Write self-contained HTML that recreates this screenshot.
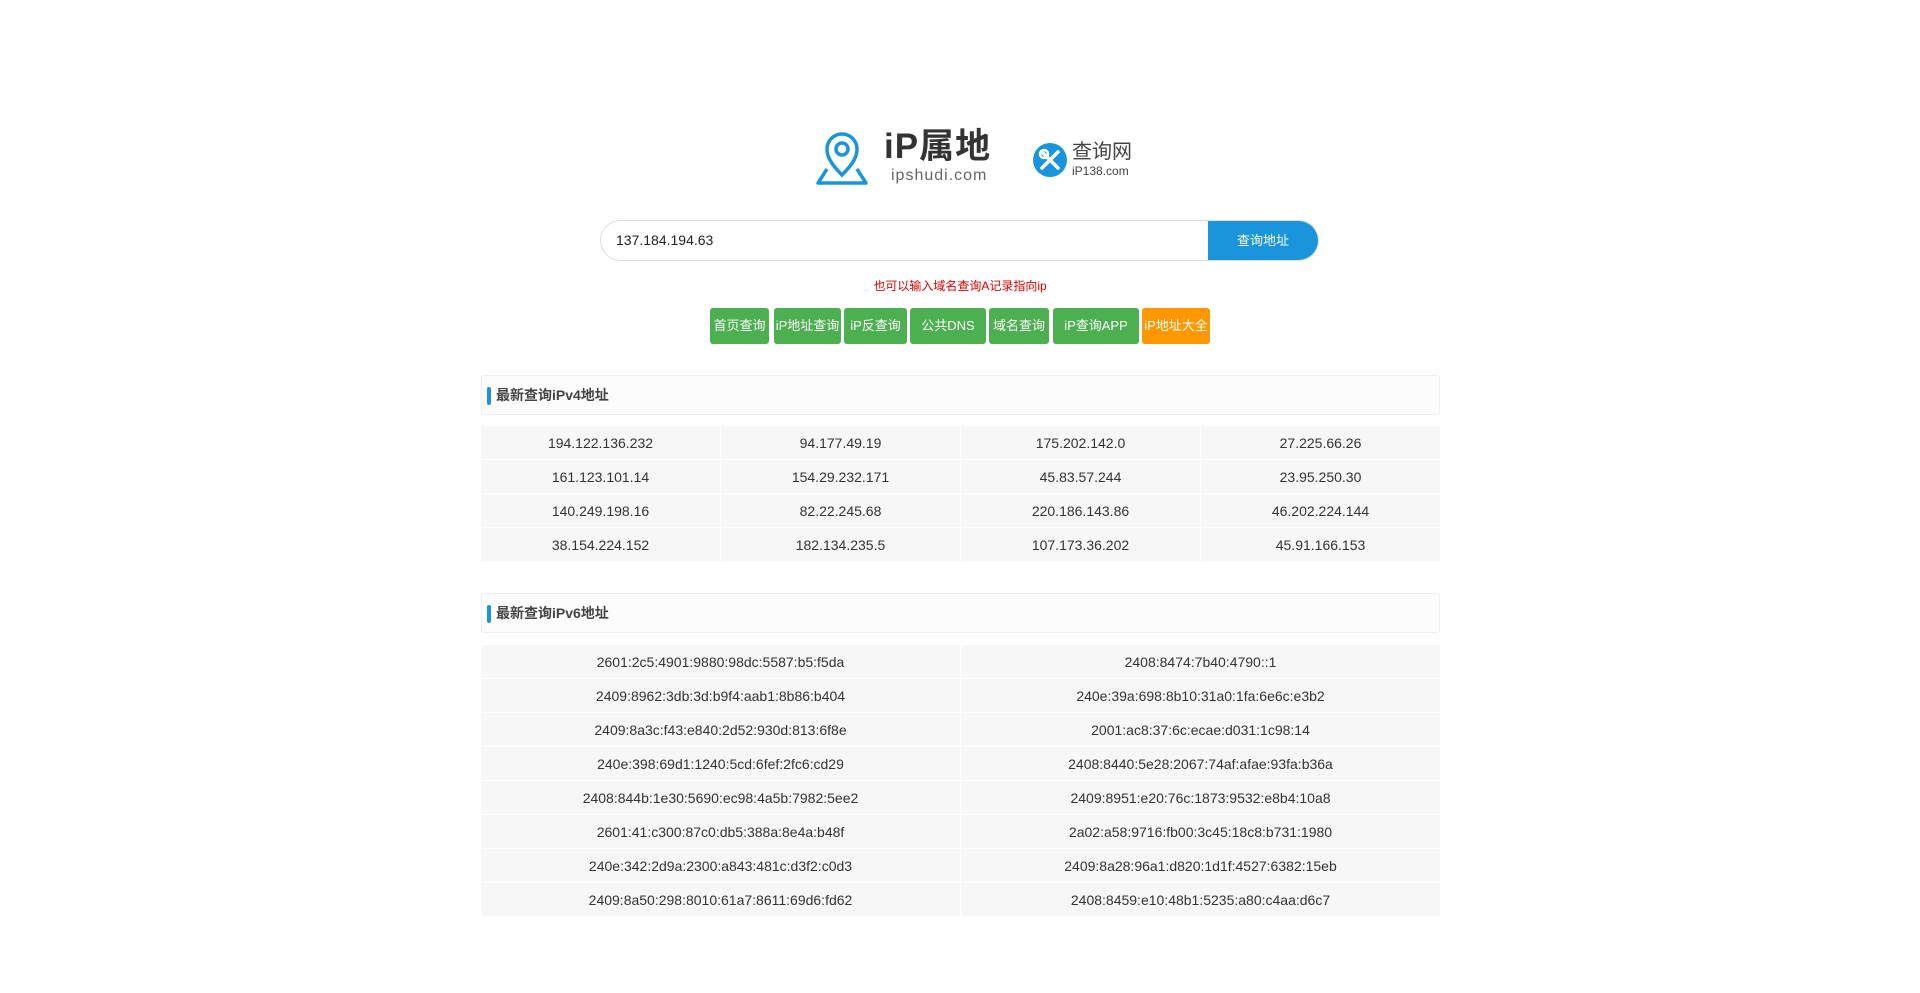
<!DOCTYPE html>
<html><head><meta charset="utf-8"><style>
*{margin:0;padding:0;box-sizing:border-box}
body{width:1920px;height:993px;background:#fff;font-family:"Liberation Sans","Noto Sans CJK SC",sans-serif;color:#333;position:relative;overflow:hidden}
.abs{position:absolute}
.search{left:600px;top:220px;width:719px;height:41px;border:1px solid #ddd;border-radius:21px;overflow:hidden}
.search .val{position:absolute;left:15px;top:11px;font-size:14px;color:#222}
.search .btn{position:absolute;right:0;top:0;width:110px;height:100%;background:#1a94db;color:#fff;font-size:13px;text-align:center;line-height:39px}
.hint{left:0;width:1920px;top:277px;text-align:center;color:#d00;font-size:12px}
.nav a{position:absolute;top:308px;height:36px;line-height:36px;text-align:center;background:#4caf50;color:#fff;font-size:13px;border-radius:3px;text-decoration:none;white-space:nowrap;overflow:hidden}
.title{left:481px;width:959px;height:40px;border:1px solid #eee;border-radius:3px;background:#fcfcfc;font-size:14px;font-weight:bold;color:#444;line-height:38px;padding-left:14px}
.title:before{content:"";position:absolute;left:5px;top:11px;width:4px;height:18px;background:#1a94db;border-radius:2px}
table{position:absolute;left:480px;width:961px;border-collapse:collapse;table-layout:fixed;font-size:14px;color:#333}
td{background:#f7f7f7;border:1px solid #fff;height:34px;text-align:center}
</style></head><body>
<svg class="abs" style="left:814px;top:131px" width="60" height="58" viewBox="0 0 60 58">
<path d="M28 44 C16 32 13 25 13 18 A15 15 0 0 1 43 18 C43 25 40 32 28 44Z" fill="none" stroke="#1a94db" stroke-width="3.5"/>
<circle cx="28" cy="18" r="6" fill="none" stroke="#1a94db" stroke-width="3.5"/>
<path d="M13 38 L4 52 H52 L43 38" fill="none" stroke="#1a94db" stroke-width="3.5" stroke-linejoin="round"/>
</svg>
<div class="abs" style="left:884px;top:127px;font-size:35px;line-height:40px;font-weight:bold;color:#333;letter-spacing:1px">iP属地</div>
<div class="abs" style="left:891px;top:167px;font-size:16px;line-height:18px;color:#666;letter-spacing:1px">ipshudi.com</div>
<svg class="abs" style="left:1032px;top:142px" width="36" height="36" viewBox="0 0 36 36"><circle cx="18" cy="18" r="17" fill="#1a94db"/><path d="M10 26 L26 10 M10 10 L16 16 M20 20 L26 26" stroke="#fff" stroke-width="3.5" stroke-linecap="round"/><circle cx="12" cy="12" r="4" fill="none" stroke="#fff" stroke-width="2.5"/></svg>
<div class="abs" style="left:1072px;top:141px;font-size:20px;line-height:22px;color:#444">查询网</div>
<div class="abs" style="left:1072px;top:164px;font-size:12px;color:#444">iP138.com</div>
<div class="abs search"><div class="val">137.184.194.63</div><div class="btn">查询地址</div></div>
<div class="abs hint">也可以输入域名查询A记录指向ip</div>
<div class="nav">
<a style="left:710px;width:59px">首页查询</a>
<a style="left:774px;width:67px">iP地址查询</a>
<a style="left:844px;width:63px">iP反查询</a>
<a style="left:910px;width:76px">公共DNS</a>
<a style="left:989px;width:60px">域名查询</a>
<a style="left:1053px;width:86px">iP查询APP</a>
<a style="left:1142px;width:68px;background:#ff9800">iP地址大全</a>
</div>
<div class="abs title" style="top:375px">最新查询iPv4地址</div>
<table style="top:425px"><tr><td>194.122.136.232</td><td>94.177.49.19</td><td>175.202.142.0</td><td>27.225.66.26</td></tr>
<tr><td>161.123.101.14</td><td>154.29.232.171</td><td>45.83.57.244</td><td>23.95.250.30</td></tr>
<tr><td>140.249.198.16</td><td>82.22.245.68</td><td>220.186.143.86</td><td>46.202.224.144</td></tr>
<tr><td>38.154.224.152</td><td>182.134.235.5</td><td>107.173.36.202</td><td>45.91.166.153</td></tr></table>
<div class="abs title" style="top:593px">最新查询iPv6地址</div>
<table style="top:644px">
<tr><td>2601:2c5:4901:9880:98dc:5587:b5:f5da</td><td>2408:8474:7b40:4790::1</td></tr>
<tr><td>2409:8962:3db:3d:b9f4:aab1:8b86:b404</td><td>240e:39a:698:8b10:31a0:1fa:6e6c:e3b2</td></tr>
<tr><td>2409:8a3c:f43:e840:2d52:930d:813:6f8e</td><td>2001:ac8:37:6c:ecae:d031:1c98:14</td></tr>
<tr><td>240e:398:69d1:1240:5cd:6fef:2fc6:cd29</td><td>2408:8440:5e28:2067:74af:afae:93fa:b36a</td></tr>
<tr><td>2408:844b:1e30:5690:ec98:4a5b:7982:5ee2</td><td>2409:8951:e20:76c:1873:9532:e8b4:10a8</td></tr>
<tr><td>2601:41:c300:87c0:db5:388a:8e4a:b48f</td><td>2a02:a58:9716:fb00:3c45:18c8:b731:1980</td></tr>
<tr><td>240e:342:2d9a:2300:a843:481c:d3f2:c0d3</td><td>2409:8a28:96a1:d820:1d1f:4527:6382:15eb</td></tr>
<tr><td>2409:8a50:298:8010:61a7:8611:69d6:fd62</td><td>2408:8459:e10:48b1:5235:a80:c4aa:d6c7</td></tr>
</table>
</body></html>
